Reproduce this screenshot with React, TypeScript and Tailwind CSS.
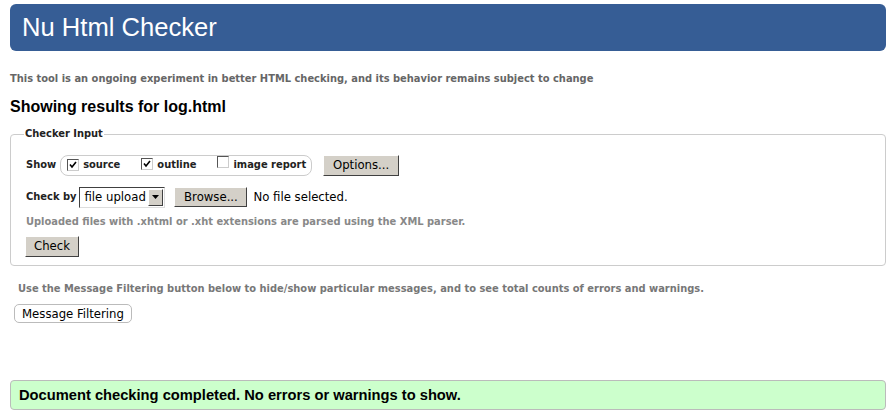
import React from "react";

const verdana = "font-['DejaVu_Sans_Condensed','DejaVu_Sans',sans-serif]";
const arial = "font-['Arial','Liberation_Sans',sans-serif]";

function Checkbox({ checked }: { checked: boolean }) {
  return (
    <span className="inline-flex h-[12px] w-[12px] shrink-0 items-center justify-center border border-t-[#555] border-l-[#555] border-r-[#ccc] border-b-[#ccc] bg-white">
      {checked && (
        <svg width="8" height="8" viewBox="0 0 8 8">
          <path d="M1 3.5 L3 6 L7 1" stroke="#000" strokeWidth="1.6" fill="none" />
        </svg>
      )}
    </span>
  );
}

function WinButton({ children, className = "" }: { children: React.ReactNode; className?: string }) {
  return (
    <span
      className={`inline-flex shrink-0 items-center justify-center whitespace-nowrap border border-t-[#fff] border-l-[#fff] border-r-[#404040] border-b-[#404040] bg-[#d4d0c8] text-[13px] text-black ${verdana} ${className}`}
    >
      {children}
    </span>
  );
}

export default function App() {
  return (
    <div className={`w-[896px] h-[420px] bg-white ${verdana} text-[11px] overflow-hidden whitespace-nowrap`}>
      <div className="px-[10px] pt-[4px]">
        <div className={`flex h-[47px] items-center rounded-[6px] bg-[#365d95] pl-[12px] text-[25.6px] text-white ${arial}`}>
          Nu Html Checker
        </div>
        <p className="mt-[21px] text-[11px] font-bold leading-[14px] text-[#666]">
          This tool is an ongoing experiment in better HTML checking, and its behavior remains subject to change
        </p>
        <h2 className={`mt-[11px] text-[16px] font-bold leading-[20px] text-black ${arial}`}>
          Showing results for log.html
        </h2>
        <fieldset className="mt-[9px] h-[140px] rounded-[4px] border border-[#ccc] px-[15px] pt-0">
          <legend className="px-[1px] -ml-[2px] text-[11px] font-bold text-[#222]">Checker Input</legend>
          <div className="mt-[12px] flex items-center">
            <span className="font-bold text-[#222]">Show</span>
            <span className="ml-[4px] flex h-[21px] w-[252px] shrink-0 items-center rounded-[8px] border border-[#ccc] pl-[6px]">
              <Checkbox checked />
              <span className="ml-[4px] font-bold text-[#222]">source</span>
              <span className="ml-[21px]"><Checkbox checked /></span>
              <span className="ml-[4px] font-bold text-[#222]">outline</span>
              <span className="ml-[21px]"><Checkbox checked={false} /></span>
              <span className="ml-[4px] font-bold text-[#222]">image report</span>
            </span>
            <WinButton className="ml-[11px] h-[21px] w-[76px]">Options...</WinButton>
          </div>
          <div className="mt-[11px] flex items-center">
            <span className="font-bold text-[#222]">Check by</span>
            <span className="ml-[3px] flex h-[21px] w-[86px] shrink-0 items-center justify-between border border-t-[#404040] border-l-[#404040] border-r-[#ddd] border-b-[#ddd] bg-white pl-[4px] pr-[1px] text-[13px] text-black">
              file upload
              <span className="flex h-[17px] w-[15px] items-center justify-center border border-t-[#fff] border-l-[#fff] border-r-[#404040] border-b-[#404040] bg-[#d4d0c8]">
                <svg width="7" height="4" viewBox="0 0 7 4"><path d="M0 0 H7 L3.5 4 Z" fill="#000" /></svg>
              </span>
            </span>
            <WinButton className="ml-[9px] h-[20px] w-[73px]">Browse...</WinButton>
            <span className="ml-[6px] text-[13px] text-black">No file selected.</span>
          </div>
          <p className="mt-[7px] font-bold text-[#888] leading-[14px]">
            Uploaded files with .xhtml or .xht extensions are parsed using the XML parser.
          </p>
          <WinButton className="mt-[7px] h-[21px] w-[54px] -ml-[1px]">Check</WinButton>
        </fieldset>
        <p className="mt-[16px] ml-[8px] font-bold leading-[14px] text-[#777]">
          Use the Message Filtering button below to hide/show particular messages, and to see total counts of errors and warnings.
        </p>
        <span className={`mt-[8px] ml-[4px] inline-flex h-[19px] w-[118px] items-center justify-center rounded-[5px] border border-[#bbb] bg-white text-[13px] text-black ${verdana}`}>
          Message Filtering
        </span>
        <div className={`mt-[57px] flex h-[30px] items-center rounded-[4px] border border-[#bbb] bg-[#ccffcc] pl-[8px] text-[14.7px] font-bold text-black ${arial}`}>
          Document checking completed. No errors or warnings to show.
        </div>
      </div>
    </div>
  );
}
